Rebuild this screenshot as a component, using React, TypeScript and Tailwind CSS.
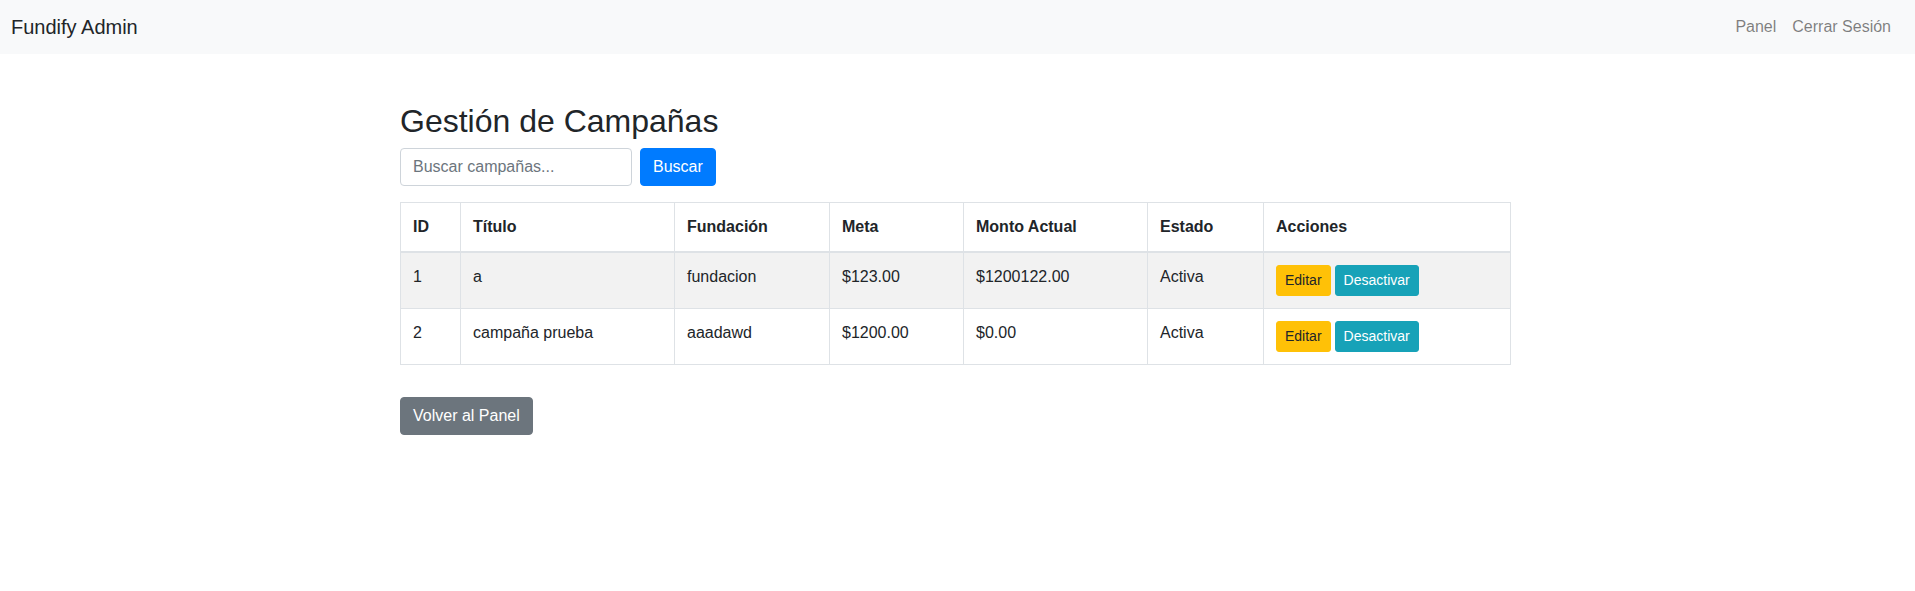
const font = { fontFamily: '"Liberation Sans", Arial, sans-serif' };

export default function App() {
    const campaigns = [
        { id: 1, title: 'a', foundation: 'fundacion', goal: '$123.00', current: '$1200122.00', status: 'Activa' },
        { id: 2, title: 'campaña prueba', foundation: 'aaadawd', goal: '$1200.00', current: '$0.00', status: 'Activa' },
    ];
    const cols = ['w-[60px]', 'w-[214px]', 'w-[155px]', 'w-[134px]', 'w-[184px]', 'w-[116px]', 'w-[247px]'];
    const heads = ['ID', 'Título', 'Fundación', 'Meta', 'Monto Actual', 'Estado', 'Acciones'];

    return (
        <div className="min-h-screen bg-white text-[16px] leading-6 text-[#212529]" style={font}>
            <nav className="flex h-[54px] items-center justify-between bg-[#f8f9fa] pl-[11px] pr-4">
                <a className="text-[20px] leading-[30px] text-[#212529]">Fundify Admin</a>
                <div className="flex">
                    <a className="px-2 text-[rgba(0,0,0,0.5)]">Panel</a>
                    <a className="px-2 text-[rgba(0,0,0,0.5)]">Cerrar Sesión</a>
                </div>
            </nav>

            <div className="flex justify-center pr-[5px]">
                <div className="mt-[48px] w-[1110px]">
                    <h2 className="mb-2 text-[32px] leading-[38.4px] font-normal">Gestión de Campañas</h2>

                    <div className="mb-4 flex gap-2">
                        <input
                            placeholder="Buscar campañas..."
                            className="h-[38px] w-[232px] rounded border border-[#ced4da] px-3 text-[16px] placeholder:text-[#6c757d]"
                        />
                        <button className="h-[38px] rounded border border-[#007bff] bg-[#007bff] px-3 text-white">Buscar</button>
                    </div>

                    <table className="w-[1110px] table-fixed border-collapse">
                        <colgroup>
                            {cols.map((c, i) => (
                                <col key={i} className={c} />
                            ))}
                        </colgroup>
                        <thead>
                            <tr>
                                {heads.map((h) => (
                                    <th key={h} className="border border-b-2 border-[#dee2e6] px-3 py-3 text-left align-bottom font-bold">
                                        {h}
                                    </th>
                                ))}
                            </tr>
                        </thead>
                        <tbody>
                            {campaigns.map((c, i) => (
                                <tr key={c.id} className={i % 2 === 0 ? 'bg-[#f2f2f2]' : ''}>
                                    <td className="border border-[#dee2e6] p-3 align-top">{c.id}</td>
                                    <td className="border border-[#dee2e6] p-3 align-top">{c.title}</td>
                                    <td className="border border-[#dee2e6] p-3 align-top">{c.foundation}</td>
                                    <td className="border border-[#dee2e6] p-3 align-top">{c.goal}</td>
                                    <td className="border border-[#dee2e6] p-3 align-top">{c.current}</td>
                                    <td className="border border-[#dee2e6] p-3 align-top">{c.status}</td>
                                    <td className="border border-[#dee2e6] p-3 align-top">
                                        <div className="flex gap-1">
                                            <button className="h-[31px] rounded-[3px] border border-[#ffc107] bg-[#ffc107] px-2 text-[14px] leading-[21px] text-[#212529]">Editar</button>
                                            <button className="h-[31px] rounded-[3px] border border-[#17a2b8] bg-[#17a2b8] px-2 text-[14px] leading-[21px] text-white">Desactivar</button>
                                        </div>
                                    </td>
                                </tr>
                            ))}
                        </tbody>
                    </table>

                    <button className="mt-[32px] h-[38px] rounded border border-[#6c757d] bg-[#6c757d] px-3 text-white">Volver al Panel</button>
                </div>
            </div>
        </div>
    );
}
